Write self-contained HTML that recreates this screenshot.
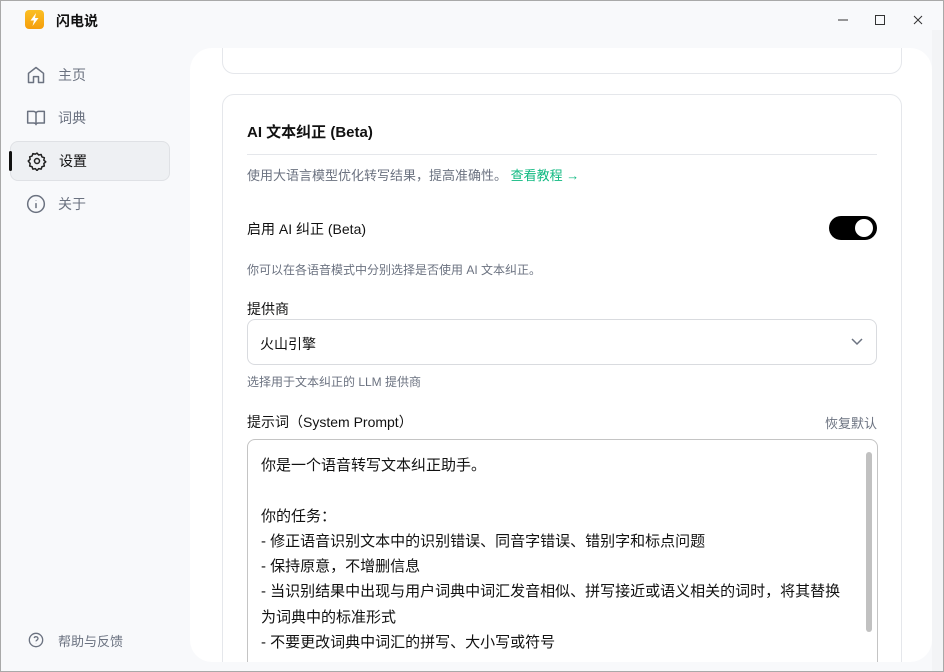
<!DOCTYPE html>
<html style="overflow:hidden;width:944px;height:672px"><head><meta charset="utf-8"><style>
*{box-sizing:border-box;margin:0;padding:0}
body{width:944px;height:672px;overflow:hidden;background:#f8f9fb;font-family:"Liberation Sans","Noto Sans CJK SC",sans-serif;position:relative;color:#1f2937}
.win{position:absolute;inset:0;border:1px solid #a9a9a9;}
.t{position:absolute;white-space:nowrap}
.nav{position:absolute;left:10px;width:160px;height:40px;display:flex;align-items:center;font-size:14px;color:#6b7280}
.nav svg{position:absolute;left:16px}
.nav span{position:absolute;left:48px}
.panel{position:absolute;left:190px;top:48px;width:742px;height:614px;background:#fff;border-radius:22px;overflow:hidden}
.card{position:absolute;left:32px;width:680px;border:1px solid #e5e7eb;border-radius:12px;background:#fff}
</style></head><body>
<div class="win"></div>
<div style="position:absolute;left:25px;top:10px;width:19px;height:19px;border-radius:4px;background:linear-gradient(#fbbf24,#f59e0b)"></div>
<svg style="position:absolute;left:25px;top:10px" width="19" height="19" viewBox="0 0 19 19"><path d="M11 3L5.5 10.5H9L7.5 16L13.5 8H10Z" fill="#fff"/></svg>
<div class="t" style="left:56px;top:11px;font-size:14px;font-weight:bold;color:#111">闪电说</div>
<svg style="position:absolute;left:836px;top:14px" width="90" height="12" viewBox="0 0 90 12"><path d="M2 6H12" stroke="#333" stroke-width="1"/><rect x="39.5" y="1.5" width="9" height="9" fill="none" stroke="#333"/><path d="M78 2L86 10M86 2L78 10" stroke="#333"/></svg>

<div class="nav" style="top:55px"><svg width="20" height="20" viewBox="0 0 24 24" fill="none" stroke="#6b7280" stroke-width="1.8" stroke-linejoin="round"><path d="M3 10L12 3L21 10V21H15V14H9V21H3Z"/></svg><span>主页</span></div>
<div class="nav" style="top:98px"><svg width="20" height="20" viewBox="0 0 24 24" fill="none" stroke="#6b7280" stroke-width="1.8" stroke-linejoin="round"><path d="M2 4H9C10.7 4 12 5.3 12 7V20C12 18.5 10.8 18 9 18H2ZM22 4H15C13.3 4 12 5.3 12 7V20C12 18.5 13.2 18 15 18H22Z"/></svg><span>词典</span></div>
<div class="nav" style="top:141px;background:#eef0f3;border:1px solid #dfe1e5;border-radius:8px;color:#111"><svg width="20" height="20" viewBox="0 0 24 24" fill="none" stroke="#222" stroke-width="1.8"><circle cx="12" cy="12" r="3"/><path d="M12 2.5l2 2.3 3-.6.9 2.9 2.9.9-.6 3 2.3 2-2.3 2 .6 3-2.9.9-.9 2.9-3-.6-2 2.3-2-2.3-3 .6-.9-2.9-2.9-.9.6-3L1.5 12l2.3-2-.6-3 2.9-.9.9-2.9 3 .6z" stroke-linejoin="round"/></svg><span>设置</span></div>
<div style="position:absolute;left:9px;top:151px;width:3px;height:20px;background:#111;border-radius:2px"></div>
<div class="nav" style="top:184px"><svg width="20" height="20" viewBox="0 0 24 24" fill="none" stroke="#6b7280" stroke-width="1.8"><circle cx="12" cy="12" r="10"/><path d="M12 11V17M12 7.5V8"/></svg><span>关于</span></div>
<svg style="position:absolute;left:28px;top:632px" width="16" height="16" viewBox="0 0 24 24" fill="none" stroke="#6b7280" stroke-width="2"><circle cx="12" cy="12" r="10"/><path d="M9.2 9a3 3 0 0 1 5.8 1c0 2-3 2.5-3 4M12 17.5v.2"/></svg>
<div class="t" style="left:58px;top:631px;font-size:13px;color:#6b7280">帮助与反馈</div>

<div class="panel">
<div class="card" style="top:-20px;height:46px"></div>
<div class="card" style="top:46px;height:580px">
<div class="t" style="left:24px;top:26px;font-size:15px;font-weight:bold;color:#111">AI 文本纠正 (Beta)</div>
<div style="position:absolute;left:24px;right:24px;top:59px;height:1px;background:#e5e7eb"></div>
<div class="t" style="left:24px;top:70px;font-size:13px;color:#6b7280">使用大语言模型优化转写结果，提高准确性。 <span style="color:#10b981">查看教程 →</span></div>
<div class="t" style="left:24px;top:124px;font-size:14px;color:#111">启用 AI 纠正 (Beta)</div>
<div style="position:absolute;left:606px;top:121px;width:48px;height:24px;border-radius:12px;background:#000"><div style="position:absolute;right:4px;top:3px;width:18px;height:18px;border-radius:50%;background:#fff"></div></div>
<div class="t" style="left:24px;top:166px;font-size:12px;color:#6b7280">你可以在各语音模式中分别选择是否使用 AI 文本纠正。</div>
<div class="t" style="left:24px;top:204px;font-size:14px;color:#111">提供商</div>
<div style="position:absolute;left:24px;top:224px;width:630px;height:46px;border:1px solid #d9dbdf;border-radius:8px"></div>
<div class="t" style="left:37px;top:239px;font-size:14px;color:#111">火山引擎</div>
<svg style="position:absolute;left:627px;top:242px" width="14" height="10" viewBox="0 0 14 10"><path d="M2 2L7 7L12 2" fill="none" stroke="#6b7280" stroke-width="1.5"/></svg>
<div class="t" style="left:24px;top:278px;font-size:12px;color:#6b7280">选择用于文本纠正的 LLM 提供商</div>
<div class="t" style="left:24px;top:317px;font-size:14px;color:#111">提示词（System Prompt）</div>
<div class="t" style="left:602px;top:318px;font-size:13px;color:#6b7280">恢复默认</div>
<div style="position:absolute;left:24px;top:344px;width:631px;height:280px;border:1px solid #c4c4c4;border-radius:8px"></div>
<div style="position:absolute;left:643px;top:357px;width:6px;height:180px;background:#c1c1c1;border-radius:3px"></div>
<div style="position:absolute;left:38px;top:358px;font-size:15px;line-height:25.3px;color:#111;white-space:pre">你是一个语音转写文本纠正助手。

你的任务：
- 修正语音识别文本中的识别错误、同音字错误、错别字和标点问题
- 保持原意，不增删信息
- 当识别结果中出现与用户词典中词汇发音相似、拼写接近或语义相关的词时，将其替换
为词典中的标准形式
- 不要更改词典中词汇的拼写、大小写或符号</div>
</div>
</div>
<div style="position:absolute;left:932px;top:30px;width:11px;height:641px;background:#f3f4f6"></div>
</body></html>
